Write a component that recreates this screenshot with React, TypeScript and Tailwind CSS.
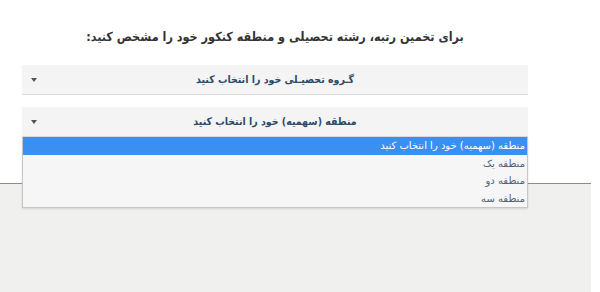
import React from 'react';

const OPTIONS = ['منطقه (سهمیه) خود را انتخاب کنید', 'منطقه یک', 'منطقه دو', 'منطقه سه'];
const CONDENSED = '"DejaVu Sans Condensed", "DejaVu Sans", sans-serif';

function Caret() {
    return (
        <svg width="6" height="4" viewBox="0 0 6 4" className="shrink-0">
            <path d="M0 0 L6 0 L3 4 Z" fill="#555" />
        </svg>
    );
}

function SelectBox({ label }: { label: string }) {
    return (
        <div className="relative flex h-[30px] w-full items-center bg-[#f4f4f4] border-b border-[#dcdcdc] pl-[9px]">
            <Caret />
            <span className="flex-1 text-center text-[10.5px] font-bold text-[#2f4a66] pr-[15px]" style={{ fontFamily: CONDENSED }}>
                {label}
            </span>
        </div>
    );
}

export default function App() {
    return (
        <div className="relative w-[600px] h-[292px] overflow-hidden bg-white" style={{ fontFamily: '"DejaVu Sans", sans-serif' }}>
            <div className="h-[183px] pt-[28px] pl-[22px]">
                <div dir="rtl" className="w-[506px] flex flex-col">
                    <h2 className="text-center text-[12.5px] leading-[18px] font-bold text-[#333]" style={{ fontFamily: CONDENSED }}>
                        برای تخمین رتبه، رشته تحصیلی و منطقه کنکور خود را مشخص کنید:
                    </h2>
                    <div className="mt-[19px] flex flex-col gap-[12px]">
                        <div dir="ltr"><SelectBox label="گـروه تحصیـلی خود را انتخاب کنید" /></div>
                        <div dir="ltr" className="relative">
                            <SelectBox label="منطقه (سهمیه) خود را انتخاب کنید" />
                            <ul dir="rtl" className="absolute left-0 top-[30px] z-10 w-full bg-[#f6f6f6] border border-t-0 border-[#c6c6c6] shadow-[0_1px_2px_rgba(0,0,0,0.12)]">
                                {OPTIONS.map((opt, i) => (
                                    <li
                                        key={i}
                                        className={`h-[17.5px] flex items-center pr-[2px] text-[10px] ${i === 0 ? 'bg-[#3a8ff0] text-white' : 'text-[#4f6470]'}`}
                                    >
                                        {opt}
                                    </li>
                                ))}
                            </ul>
                        </div>
                    </div>
                </div>
            </div>
            <div className="w-[591px] h-[109px] bg-[#f0f0ee] border-t border-[#8c8c8c]" />
        </div>
    );
}
